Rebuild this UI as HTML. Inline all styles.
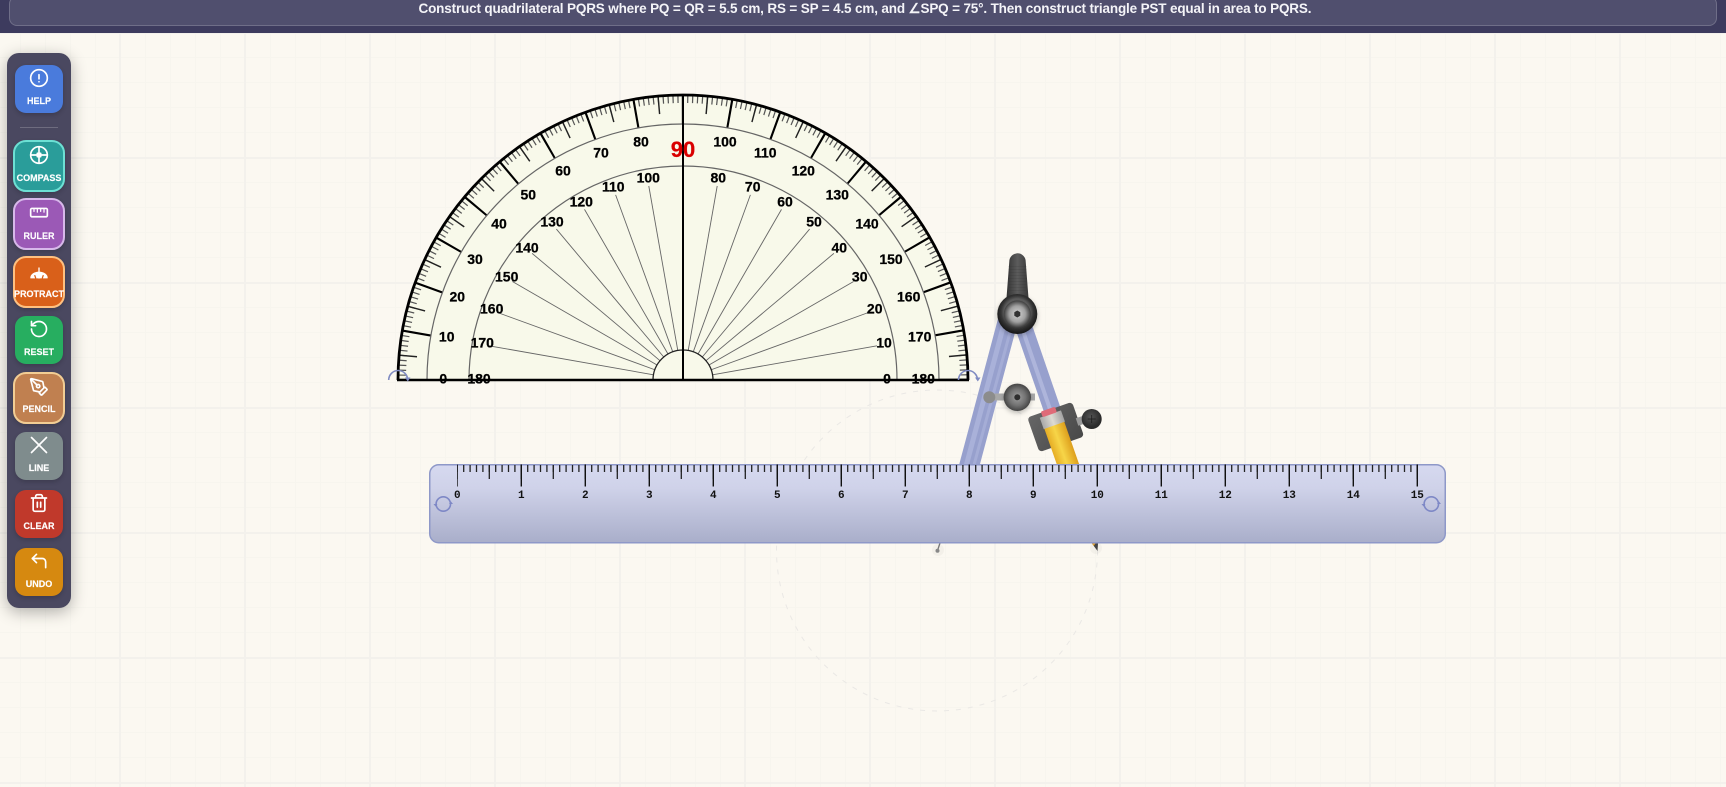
<!DOCTYPE html>
<html lang="en"><head><meta charset="utf-8"><title>Geometry Construction</title>
<style>
*{box-sizing:border-box}
html,body{margin:0;padding:0;width:1726px;height:787px;overflow:hidden}
body{position:relative;font-family:"Liberation Sans",sans-serif;background-color:#fbf8f1}
#grid{position:absolute;left:0;top:33px;width:1726px;height:754px;background-image:
linear-gradient(90deg,#f3f1ec 2px,transparent 2px),
linear-gradient(180deg,#f3f1ec 2px,transparent 2px),
linear-gradient(90deg,#f7f5ee 1px,transparent 1px),
linear-gradient(180deg,#f7f5ee 1px,transparent 1px);
background-size:125px 125px,125px 125px,25px 25px,25px 25px;
background-position:-6px -1px,-6px -1px,-5px -1px,-5px -1px}
#bar{position:absolute;left:0;top:0;width:1726px;height:33px;background:#3d3b5e}
#barin{position:absolute;left:9px;top:-4px;width:1708px;height:30px;background:#504f6e;border:1px solid rgba(255,255,255,.18);border-radius:8px}
#title{position:absolute;left:0;top:0;width:1726px;height:33px}
#stage{position:absolute;left:0;top:0}
#side{position:absolute;left:7px;top:53px;width:64px;height:555px;background:#4a4860;border-radius:12px;box-shadow:0 4px 16px rgba(0,0,0,.3)}
.b{position:absolute;border-radius:11px;color:#fff;font-weight:700;font-size:9px;text-align:center;box-shadow:0 2px 5px rgba(0,0,0,.18);-webkit-text-stroke:.15px #fff}
.n{left:15px;width:48px;height:48px}
.a{left:13px;width:52px;height:52px;border:2px solid;border-radius:13px}
.b span{position:absolute;left:-4px;right:-4px;line-height:10px;white-space:nowrap}
.b svg{position:absolute;fill:none;stroke:#fff;stroke-width:2;stroke-linecap:round;stroke-linejoin:round}
</style></head><body>
<div id="grid"></div>
<svg id="stage" width="1726" height="787" viewBox="0 0 1726 787">
<defs>
<linearGradient id="rg" x1="0" y1="0" x2="0" y2="1"><stop offset="0" stop-color="#d6d9f0"/><stop offset=".3" stop-color="#cfd2e9"/><stop offset="1" stop-color="#a9aeca"/></linearGradient>
<linearGradient id="hg" x1="0" y1="0" x2="1" y2="0"><stop offset="0" stop-color="#333"/><stop offset=".5" stop-color="#5c5c5c"/><stop offset="1" stop-color="#383838"/></linearGradient>
<radialGradient id="hub" cx=".5" cy=".45" r=".55"><stop offset=".6" stop-color="#5a5a5a"/><stop offset=".75" stop-color="#333"/><stop offset="1" stop-color="#151515"/></radialGradient>
<radialGradient id="hubi"><stop offset="0" stop-color="#d4d4d4"/><stop offset=".6" stop-color="#a0a0a0"/><stop offset="1" stop-color="#3e3e3e"/></radialGradient>
<radialGradient id="ball"><stop offset="0" stop-color="#a0a0a0"/><stop offset=".6" stop-color="#727272"/><stop offset="1" stop-color="#444"/></radialGradient>
<radialGradient id="kn" cx=".45" cy=".4"><stop offset="0" stop-color="#555"/><stop offset="1" stop-color="#2b2b2b"/></radialGradient>
<linearGradient id="pen" x1="0" y1="0" x2="1" y2="0"><stop offset="0" stop-color="#e6ad25"/><stop offset=".45" stop-color="#f7d548"/><stop offset="1" stop-color="#dd9f1c"/></linearGradient>
<linearGradient id="fer" x1="0" y1="0" x2="1" y2="0"><stop offset="0" stop-color="#a8a8a8"/><stop offset=".5" stop-color="#dedbd2"/><stop offset="1" stop-color="#a2a2a2"/></linearGradient>
<linearGradient id="hold" x1="0" y1="0" x2="1" y2="1"><stop offset="0" stop-color="#666"/><stop offset="1" stop-color="#484848"/></linearGradient>
<filter id="ds" x="-30%" y="-30%" width="160%" height="160%"><feDropShadow dx="0" dy="2" stdDeviation="2.5" flood-opacity=".25"/></filter>
</defs>

<!-- trace circle -->
<circle cx="937" cy="550.5" r="160.5" fill="none" stroke="#eae8e5" stroke-width="1" stroke-dasharray="5 7"/>

<!-- protractor -->
<path d="M398 380A285 285 0 0 1 968 380Z" fill="#f8f9ea"/>
<g fill="none">
<path d="M402 380A281 281 0 0 1 964 380" pathLength="180" stroke="#555" stroke-width="8" stroke-dasharray=".25 .75" stroke-dashoffset=".125"/>
<path d="M407 380A276 276 0 0 1 959 380" pathLength="180" stroke="#222" stroke-width="18" stroke-dasharray=".3 4.7" stroke-dashoffset=".15"/>
<path d="M412.500 380A270.500 270.500 0 0 1 953.500 380" pathLength="180" stroke="#000" stroke-width="29" stroke-dasharray=".45 9.55" stroke-dashoffset=".225"/>
<path d="M427 380A256 256 0 0 1 939 380" stroke="#666" stroke-width="1.2"/>
<path d="M469 380A214 214 0 0 1 897 380" stroke="#666" stroke-width="1.2"/>
</g>
<g transform="translate(683 380)" stroke="#666" stroke-width=".9">
<line x1="-30" x2="-197" transform="rotate(10)"/><line x1="-30" x2="-197" transform="rotate(20)"/><line x1="-30" x2="-197" transform="rotate(30)"/><line x1="-30" x2="-197" transform="rotate(40)"/><line x1="-30" x2="-197" transform="rotate(50)"/><line x1="-30" x2="-197" transform="rotate(60)"/><line x1="-30" x2="-197" transform="rotate(70)"/><line x1="-30" x2="-197" transform="rotate(80)"/>
<line x1="-30" x2="-197" transform="rotate(100)"/><line x1="-30" x2="-197" transform="rotate(110)"/><line x1="-30" x2="-197" transform="rotate(120)"/><line x1="-30" x2="-197" transform="rotate(130)"/><line x1="-30" x2="-197" transform="rotate(140)"/><line x1="-30" x2="-197" transform="rotate(150)"/><line x1="-30" x2="-197" transform="rotate(160)"/><line x1="-30" x2="-197" transform="rotate(170)"/>
</g>
<path d="M653 380A30 30 0 0 1 713 380Z" fill="#f8f9ea" stroke="#222" stroke-width="1.3"/>
<path d="M398 380A285 285 0 0 1 968 380" fill="none" stroke="#000" stroke-width="2.8"/>
<line x1="397" y1="380" x2="969" y2="380" stroke="#000" stroke-width="2.4"/>
<line x1="683" y1="95" x2="683" y2="380" stroke="#000" stroke-width="2"/>
<g font-family="'Liberation Sans',sans-serif" font-weight="700" font-size="14" text-anchor="middle" fill="#000" stroke="#000" stroke-width=".25" dominant-baseline="central">
<text x="443.300" y="378.300">0</text><text x="446.700" y="336.700">10</text><text x="457.300" y="296.700">20</text><text x="475" y="259">30</text><text x="499" y="223.300">40</text><text x="528.300" y="194.700">50</text><text x="563" y="170.700">60</text><text x="601" y="152.700">70</text><text x="641" y="141.700">80</text>
<text x="479" y="378.300">180</text><text x="482.300" y="342.700">170</text><text x="491.700" y="308.300">160</text><text x="506.700" y="276.700">150</text><text x="527" y="247.700">140</text><text x="552" y="221.700">130</text><text x="581.300" y="201.700">120</text><text x="613.300" y="186.700">110</text><text x="648.300" y="177.300">100</text>
<text x="725" y="141.700">100</text><text x="765.300" y="152.700">110</text><text x="803.300" y="170.700">120</text><text x="837.300" y="194.700">130</text><text x="867" y="223.300">140</text><text x="891" y="259">150</text><text x="908.700" y="296.700">160</text><text x="919.700" y="336.700">170</text><text x="923.300" y="378.300">180</text>
<text x="718.300" y="177.300">80</text><text x="752.700" y="186.700">70</text><text x="785" y="201.700">60</text><text x="814" y="221.700">50</text><text x="839.300" y="247.700">40</text><text x="859.700" y="276.700">30</text><text x="874.700" y="308.300">20</text><text x="884" y="342.700">10</text><text x="887" y="378.300">0</text>
<text x="683" y="149.500" font-size="22" fill="#d90000" stroke="#d90000">90</text>
</g>
<g fill="none" stroke="#7f8ac2" stroke-width="1.6">
<path d="M388.700 380A9.500 9.500 0 0 1 407.700 380"/><path d="M958.500 380A9.500 9.500 0 0 1 977.500 380"/>
</g>
<path d="M405 377.500l5.500 0-2.700 4zM975 377.500l5.500 0-2.700 4z" fill="#7f8ac2"/>

<!-- compass -->
<g fill="none">
<line x1="1008" y1="320" x2="967" y2="474" stroke="#97a0cd" stroke-width="20"/>
<line x1="1005" y1="320" x2="964" y2="474" stroke="#a9b1d9" stroke-width="5"/>
<line x1="1012" y1="325" x2="971" y2="476" stroke="#a5add6" stroke-width="3"/>
<line x1="1022" y1="322" x2="1053" y2="412" stroke="#97a0cd" stroke-width="17"/>
<line x1="1021" y1="325" x2="1051" y2="412" stroke="#aeb5db" stroke-width="4"/>
</g>
<path d="M1009.300 261.500A8 8 0 0 1 1025.700 261.500L1028.500 298L1006.500 298Z" fill="url(#hg)"/>
<line x1="1017.500" y1="266" x2="1017.500" y2="292" stroke="#2e2e2e" stroke-opacity=".15" stroke-width="18" stroke-dasharray="1 2"/>
<g filter="url(#ds)"><circle cx="1017.300" cy="314" r="20" fill="url(#hub)"/></g>
<circle cx="1017.300" cy="314" r="13.500" fill="url(#hubi)"/>
<path d="M1017.300 310.500l3 1.750v3.500l-3 1.750-3-1.750v-3.500z" fill="#333"/>
<rect x="993" y="393.500" width="42" height="7" fill="#a8a8a8"/>
<circle cx="989.300" cy="397.300" r="6" fill="#8c8c8c"/>
<g filter="url(#ds)"><circle cx="1017.300" cy="397.300" r="13.700" fill="url(#ball)"/></g>
<circle cx="1017.300" cy="397.300" r="3" fill="#2e2e2e"/>
<!-- pencil and holder -->
<g transform="translate(1055.700 427) rotate(-19.300)">
<rect x="-23.700" y="-18.300" width="47.400" height="36.600" rx="3.500" fill="url(#hold)"/>
<rect x="-11.300" y="-3" width="21.100" height="70" fill="url(#pen)"/>
<rect x="-12" y="-14" width="22.500" height="12" fill="url(#fer)"/>
<rect x="-9" y="-19.500" width="15" height="6" rx="1.500" fill="#df6b78"/>
</g>
<line x1="1077" y1="422" x2="1086" y2="419" stroke="#999" stroke-width="8"/>
<circle cx="1091.700" cy="419" r="10" fill="url(#kn)"/>
<path d="M1091.700 415v8M1087.700 419h8" stroke="#1c1c1c" stroke-width=".8"/>
<!-- tips -->
<circle cx="938" cy="550" r="6" fill="#000" opacity=".03"/>
<line x1="940" y1="543" x2="937.700" y2="550" stroke="#777" stroke-width="1.300"/>
<circle cx="937.500" cy="550.700" r="2" fill="#888"/>
<circle cx="1096" cy="548" r="6" fill="#000" opacity=".03"/>
<path d="M1092 543.500L1098 543.500L1097.500 551Z" fill="#444"/>
<path d="M1092 543.500L1095.500 543.500L1093.700 546Z" fill="#e0a030"/>

<!-- ruler -->
<rect x="429.750" y="464.750" width="1015.500" height="78" rx="9" fill="url(#rg)" stroke="#8e98c8" stroke-width="1.500"/>
<g fill="none">
<line x1="457.300" y1="468.500" x2="1418" y2="468.500" stroke="#222" stroke-width="7" stroke-dasharray="1.300 5.100" stroke-dashoffset=".65"/>
<line x1="457.300" y1="472" x2="1418" y2="472" stroke="#222" stroke-width="14" stroke-dasharray="1.300 30.700" stroke-dashoffset=".65"/>
<line x1="457.300" y1="475.500" x2="1418" y2="475.500" stroke="#111" stroke-width="22" stroke-dasharray="1.400 62.600" stroke-dashoffset=".7"/>
<circle cx="443.300" cy="504" r="7.200" stroke="#7e88c6" stroke-width="1.600"/>
<circle cx="1431.300" cy="504" r="7.200" stroke="#7e88c6" stroke-width="1.600"/>
</g>
<path d="M433.500 504h4l-2 2.500zM449 504h4l-2-2.500zM1421.500 504h4l-2 2.500zM1437 504h4l-2-2.500z" fill="#7e88c6"/>
<g font-family="'Liberation Mono',monospace" font-weight="700" font-size="11" text-anchor="middle" fill="#111" dominant-baseline="central">
<text x="457.300" y="496">0</text><text x="521.300" y="496">1</text><text x="585.300" y="496">2</text><text x="649.300" y="496">3</text><text x="713.300" y="496">4</text><text x="777.300" y="496">5</text><text x="841.300" y="496">6</text><text x="905.300" y="496">7</text><text x="969.300" y="496">8</text><text x="1033.300" y="496">9</text><text x="1097.300" y="496">10</text><text x="1161.300" y="496">11</text><text x="1225.300" y="496">12</text><text x="1289.300" y="496">13</text><text x="1353.300" y="496">14</text><text x="1417.300" y="496">15</text>
</g>
</svg>

<div id="bar"><div id="barin"></div>
<svg id="title" viewBox="0 0 1726 33"><text x="418.500" y="13" font-family="'Liberation Sans',sans-serif" font-weight="700" font-size="13.500" fill="#f4f4f8" textLength="893" lengthAdjust="spacing">Construct quadrilateral PQRS where PQ = QR = 5.5 cm, RS = SP = 4.5 cm, and ∠SPQ = 75°. Then construct triangle PST equal in area to PQRS.</text></svg>
</div>

<div id="side"></div>
<div style="position:absolute;left:20px;top:127px;width:38px;height:1px;background:rgba(255,255,255,.2)"></div>

<div class="b n" style="top:65px;background:#4a7bdc"><svg style="left:14px;top:3px" width="20" height="20" viewBox="0 0 24 24"><circle cx="12" cy="12" r="10"/><path d="M12 8v5M12 16.500v.01"/></svg><span style="top:31px">HELP</span></div>
<div class="b a" style="top:140px;background:#2a9d9a;border-color:#6de0d4"><svg style="left:14px;top:3px" width="20" height="20" viewBox="0 0 24 24"><circle cx="12" cy="12" r="10"/><path d="M12 2v7M12 15v7M2 12h7M15 12h7"/><rect x="10" y="10" width="4" height="4" fill="#fff"/></svg><span style="top:31px">COMPASS</span></div>
<div class="b a" style="top:198px;background:#9b59b6;border-color:#d7b8ea"><svg style="left:14px;top:2.5px" width="20" height="20" viewBox="0 0 24 24"><rect x="2" y="6.500" width="20" height="10" rx="1.500"/><path d="M6 7v3M10 7v4M14 7v3M18 7v4" stroke-width="1.500"/></svg><span style="top:31px">RULER</span></div>
<div class="b a" style="top:256px;background:#d9601a;border-color:#ffc080"><svg style="left:14px;top:3px" width="20" height="20" viewBox="0 0 24 24"><path d="M2 20.400a10 7.200 0 0 1 20 0z" fill="#fff" stroke-width="1"/><path d="M12 8.400v12" stroke-width="1.600"/><path d="M7 17.500l1 3M17 17.500l-1 3" stroke="#d9601a" stroke-width="1.500"/></svg><span style="top:31px">PROTRACT</span></div>
<div class="b n" style="top:316px;background:#27ae60"><svg style="left:14px;top:3px" width="20" height="20" viewBox="0 0 24 24"><path d="M3 12a9 9 0 1 0 9-9 9.750 9.750 0 0 0-6.740 2.740L3 8"/><path d="M3 3v5h5"/></svg><span style="top:31px">RESET</span></div>
<div class="b a" style="top:372px;background:#c08050;border-color:#f2cd94"><svg style="left:14px;top:3px" width="20" height="20" viewBox="0 0 24 24"><path d="M15.707 21.293a1 1 0 0 1-1.414 0l-1.586-1.586a1 1 0 0 1 0-1.414l5.586-5.586a1 1 0 0 1 1.414 0l1.586 1.586a1 1 0 0 1 0 1.414z"/><path d="m18 13-1.375-6.874a1 1 0 0 0-.746-.776L3.235 2.028a1 1 0 0 0-1.207 1.207L5.350 15.879a1 1 0 0 0 .776.746L13 18"/><path d="m2.300 2.300 7.286 7.286"/><circle cx="11" cy="11" r="2"/></svg><span style="top:30px">PENCIL</span></div>
<div class="b n" style="top:432px;background:#7f8c8d"><svg style="left:14px;top:3px" width="20" height="20" viewBox="0 0 24 24"><path d="M3 3l18 18M21 3L3 21"/></svg><span style="top:31px">LINE</span></div>
<div class="b n" style="top:490px;background:#c0392b"><svg style="left:14px;top:3px" width="20" height="20" viewBox="0 0 24 24"><path d="M3 6h18M19 6v14a2 2 0 0 1-2 2H7a2 2 0 0 1-2-2V6M8 6V4a2 2 0 0 1 2-2h4a2 2 0 0 1 2 2v2M10 11v6M14 11v6"/></svg><span style="top:31px">CLEAR</span></div>
<div class="b n" style="top:548px;background:#d68910"><svg style="left:14px;top:3px" width="20" height="20" viewBox="0 0 24 24"><path d="M9 14L4 9l5-5"/><path d="M20 20v-7a4 4 0 0 0-4-4H4"/></svg><span style="top:31px">UNDO</span></div>
</body></html>
